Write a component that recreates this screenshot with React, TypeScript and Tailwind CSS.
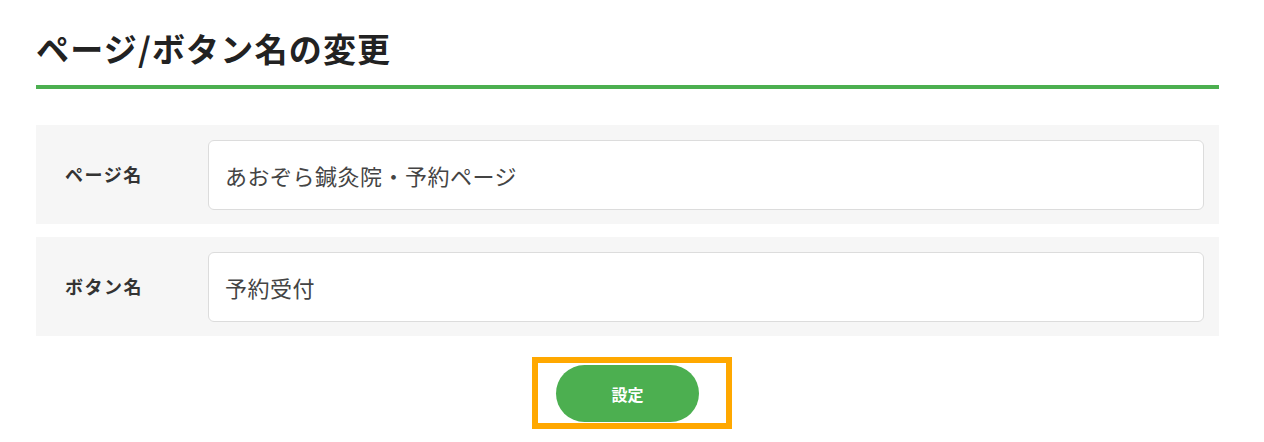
import React from 'react';

const font = { fontFamily: '"Noto Sans CJK JP", "Noto Sans", sans-serif' };

const fields = [
  { label: 'ページ名', value: 'あおぞら鍼灸院・予約ページ' },
  { label: 'ボタン名', value: '予約受付' },
];

export default function App() {
  return (
    <div className="w-[1264px] h-[442px] bg-white" style={font}>
      <div className="ml-[36px] w-[1183px] pt-[26px]">
        <h2 className="text-[33px] leading-[44px] font-bold text-[#222] tracking-[1.2px]">
          ページ/ボタン名の変更
        </h2>
        <div className="mt-[15px] h-[4px] bg-[#4caf50]" />

        <div className="mt-[36px] flex flex-col gap-[13px]">
          {fields.map((f) => (
            <div key={f.label} className="flex items-center bg-[#f6f6f6] h-[99px] pr-[15px]">
              <div className="w-[172px] pl-[29px] text-[18px] font-bold text-[#333] tracking-[1.5px]">
                {f.label}
              </div>
              <input
                type="text"
                defaultValue={f.value}
                className="flex-1 h-[70px] bg-white border border-[#dcdcdc] rounded-[6px] px-[16px] text-[22px] text-[#444] tracking-[0.5px] outline-none"
                style={font}
              />
            </div>
          ))}
        </div>

        <div className="mt-[29px] flex justify-center">
          <div className="relative">
            <button className="w-[143px] h-[57px] rounded-full bg-[#4caf50] text-white text-[16px] font-bold">
              設定
            </button>
            <div className="absolute left-[-24px] top-[-8px] w-[200px] h-[72px] border-[6px] border-[#ffa800] pointer-events-none" />
          </div>
        </div>
      </div>
    </div>
  );
}
